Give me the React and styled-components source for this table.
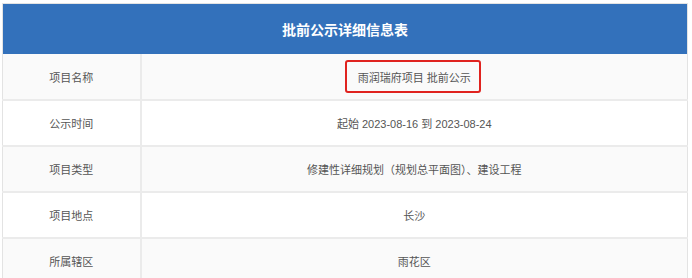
import styled, { createGlobalStyle } from "styled-components";

const GlobalStyle = createGlobalStyle`
  html, body {
    margin: 0;
    padding: 0;
    background: #fff;
  }
  body {
    font-family: "Liberation Sans", "Noto Sans CJK SC", sans-serif;
  }
`;

const Page = styled.div`
  padding: 3px 4px 0 2px;
`;

const Table = styled.table`
  width: 100%;
  border-collapse: collapse;
  border: 1px solid #e3e3e3;
  table-layout: fixed;
`;

const LabelCol = styled.col`
  width: 138px;
`;

const HeaderCell = styled.th`
  height: 50px;
  padding: 0;
  background: #3371bb;
  color: #fff;
  font-family: "Noto Sans CJK SC", sans-serif;
  font-size: 14px;
  font-weight: bold;
  text-align: center;
  vertical-align: middle;
`;

const Row = styled.tr`
  height: 46px;
  background: ${(p) => (p.$striped ? "#fafafa" : "#fff")};
  border-bottom: 2px solid #ebebeb;
`;

const LabelCell = styled.td`
  padding: 0;
  border-right: 2px solid #ebebeb;
  color: #555;
  font-size: 11px;
  text-align: center;
  vertical-align: middle;
`;

const ValueCell = styled.td`
  padding: 0;
  color: #555;
  font-size: 11px;
  text-align: center;
  vertical-align: middle;
`;

const Marked = styled.span`
  position: relative;
  display: inline-block;

  &::after {
    content: "";
    position: absolute;
    left: -13px;
    right: -10px;
    top: -9px;
    bottom: -8px;
    border: 2px solid #e0231f;
    border-radius: 3px;
  }
`;

const rows = [
  { label: "项目名称", value: "雨润瑞府项目 批前公示", marked: true },
  { label: "公示时间", value: "起始 2023-08-16 到 2023-08-24" },
  { label: "项目类型", value: "修建性详细规划（规划总平面图）、建设工程" },
  { label: "项目地点", value: "长沙" },
  { label: "所属辖区", value: "雨花区" },
];

export default function App() {
  return (
    <Page>
      <GlobalStyle />
      <Table>
        <colgroup>
          <LabelCol />
          <col />
        </colgroup>
        <thead>
          <tr>
            <HeaderCell colSpan={2}>批前公示详细信息表</HeaderCell>
          </tr>
        </thead>
        <tbody>
          {rows.map((r, i) => (
            <Row key={r.label} $striped={i % 2 === 0}>
              <LabelCell>{r.label}</LabelCell>
              <ValueCell>
                {r.marked ? <Marked>{r.value}</Marked> : r.value}
              </ValueCell>
            </Row>
          ))}
        </tbody>
      </Table>
    </Page>
  );
}
